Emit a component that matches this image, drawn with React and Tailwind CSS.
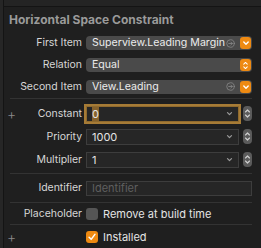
import React from 'react';

const font = { fontFamily: 'Inter, "Liberation Sans", sans-serif' };

const Down = ({ className = '' }) => (
  <svg viewBox="0 0 10 10" className={className} fill="none" stroke="currentColor" strokeWidth="1.4" strokeLinecap="round" strokeLinejoin="round">
    <polyline points="2.8,4 5,6.2 7.2,4" />
  </svg>
);

const UpDown = ({ className = '' }) => (
  <svg viewBox="0 0 10 14" className={className} fill="none" stroke="currentColor" strokeWidth="1.3" strokeLinecap="round" strokeLinejoin="round">
    <polyline points="2.8,5.3 5,3.1 7.2,5.3" />
    <polyline points="2.8,8.7 5,10.9 7.2,8.7" />
  </svg>
);

const GoTo = () => (
  <svg viewBox="0 0 10 10" className="w-[9px] h-[9px] text-[#8a8a8a]" fill="none" stroke="currentColor" strokeWidth="0.9" strokeLinecap="round" strokeLinejoin="round">
    <circle cx="5" cy="5" r="4.2" />
    <line x1="3" y1="5" x2="7" y2="5" />
    <polyline points="5.4,3.4 7,5 5.4,6.6" />
  </svg>
);

const Row = ({ label, plus, h, children }) => (
  <div className={`flex items-center ${h}`}>
    <div className="relative w-[78px] text-right text-[10.5px] tracking-[-0.05px] text-[#d6d6d6] leading-[14px] whitespace-nowrap">
      {plus && <span className="absolute left-[3px] top-1/2 -translate-y-1/2 text-[14px] font-light text-[#8a8a8a]">+</span>}
      {label}
    </div>
    <div className="ml-[4px] w-[166px] flex items-center">{children}</div>
  </div>
);

const Popup = ({ value, goto, updown }) => (
  <div className="relative w-full h-[14px] rounded-[4px] bg-[#4a4a4a] flex items-center pl-[6px] pr-[1px]">
    <span className="flex-1 whitespace-nowrap overflow-hidden text-[10.6px] text-[#ececec] leading-[14px]">{value}</span>
    {goto && (
      <div className="absolute right-[17px] top-[2.5px] flex">
        <GoTo />
      </div>
    )}
    <div className="ml-[2px] w-[11px] h-[12px] rounded-[3px] bg-[#ee8a12] flex items-center justify-center text-white shrink-0">
      {updown ? <UpDown className="w-[9px] h-[11px]" /> : <Down className="w-[10px] h-[10px]" />}
    </div>
  </div>
);

const Stepper = () => (
  <div className="ml-[4px] w-[9px] h-[15px] rounded-[4px] bg-[#5b5b5b] flex items-center justify-center text-[#d0d0d0]">
    <UpDown className="w-[9px] h-[13px]" />
  </div>
);

const Field = ({ value, focused }) => (
  <>
    <div
      className={`w-[154px] h-[16px] flex items-center pl-[5px] pr-[4px] bg-[#262626] border ${
        focused ? 'border-[#8f6a2e] shadow-[0_0_0_2px_#a67b36]' : 'border-[#3d3d3d]'
      }`}
    >
      <span className="flex-1 text-[11px] text-[#e4e4e4] leading-[14px]">
        {focused ? <span className="bg-[#86622c]">{value}</span> : value}
      </span>
      <Down className="w-[9px] h-[9px] text-[#9a9a9a]" />
    </div>
    <Stepper />
  </>
);

const Sep = () => <div className="ml-[6px] mr-[9px] h-px bg-[#333333]" />;

export default function App() {
  return (
    <div className="w-[261px] h-[248px] bg-[#1f1f1f] flex overflow-hidden" style={font}>
      <div className="w-[3px] bg-[#262626]" />
      <div className="flex-1 flex flex-col border-l border-[#141414]">
        <div className="h-[7px] bg-[#242424] border-b border-[#141414]" />
        <div className="h-[25px] flex items-center pl-[5px] text-[12px] font-bold text-[#9a9a9a]">
          Horizontal Space Constraint
        </div>
        <Row label="First Item" h="h-[22px]">
          <Popup value="Superview.Leading Margin" goto />
        </Row>
        <Row label="Relation" h="h-[22px]">
          <Popup value="Equal" updown />
        </Row>
        <Row label="Second Item" h="h-[21px]">
          <Popup value="View.Leading" goto />
        </Row>
        <div className="h-px" />
        <Sep />
        <div className="pt-[3px] pb-[2px]">
          <Row label="Constant" plus h="h-[23px]">
            <Field value="0" focused />
          </Row>
          <Row label="Priority" h="h-[23px]">
            <Field value="1000" />
          </Row>
          <Row label="Multiplier" h="h-[23px]">
            <Field value="1" />
          </Row>
        </div>
        <Sep />
        <Row label="Identifier" h="h-[28px]">
          <div className="w-[166px] h-[15px] flex items-center pl-[5px] bg-[#262626] border border-[#3d3d3d] text-[11px] text-[#5f5f5f] leading-[14px]">
            Identifier
          </div>
        </Row>
        <Sep />
        <Row label="Placeholder" h="h-[21px]">
          <div className="w-[12px] h-[12px] rounded-[3px] bg-[#555555] shrink-0" />
          <span className="ml-[5px] text-[11px] text-[#e4e4e4] leading-[14px] whitespace-nowrap">Remove at build time</span>
        </Row>
        <Sep />
        <Row label="" plus h="h-[23px]">
          <div className="w-[12px] h-[12px] rounded-[3px] bg-[#ee8a12] flex items-center justify-center shrink-0">
            <svg viewBox="0 0 12 12" className="w-[10px] h-[10px]" fill="none" stroke="white" strokeWidth="1.8" strokeLinecap="round" strokeLinejoin="round">
              <polyline points="2.5,6.3 5,8.8 9.5,2.8" />
            </svg>
          </div>
          <span className="ml-[5px] text-[11px] text-[#e4e4e4] leading-[14px]">Installed</span>
        </Row>
      </div>
    </div>
  );
}
